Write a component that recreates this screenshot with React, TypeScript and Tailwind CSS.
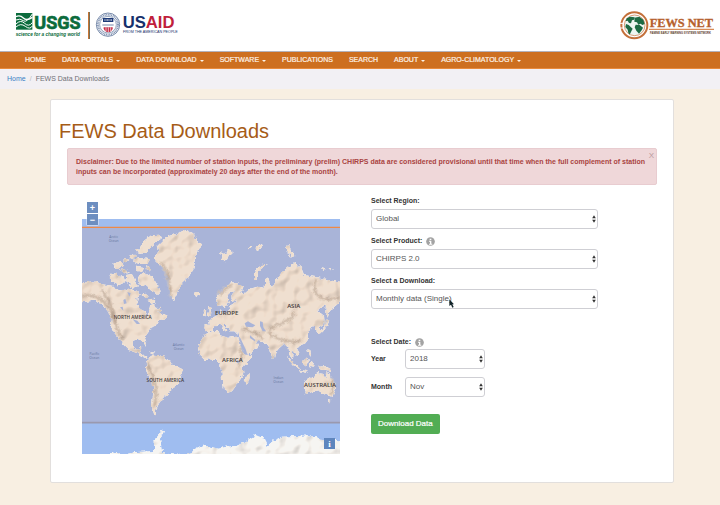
import type { ReactNode } from "react";

const NAV: { label: string; menu?: boolean }[] = [
  { label: "HOME" },
  { label: "DATA PORTALS", menu: true },
  { label: "DATA DOWNLOAD", menu: true },
  { label: "SOFTWARE", menu: true },
  { label: "PUBLICATIONS" },
  { label: "SEARCH" },
  { label: "ABOUT", menu: true },
  { label: "AGRO-CLIMATOLOGY", menu: true },
];

function UsgsLogo() {
  return (
    <svg viewBox="45 36 201 84" className="h-7 w-[67px]" role="img" aria-label="USGS">
      <rect x="48" y="39" width="49" height="50" fill="#0b6b3c" />
      <path d="M48 50 Q60 44 70 54 T97 52" fill="none" stroke="#fff" strokeWidth="4" />
      <path d="M48 60 Q60 54 70 62 T97 42" fill="none" stroke="#fff" strokeWidth="3" />
      <path d="M48 72 Q62 58 74 70 T97 68 M48 81 Q62 68 76 79 T97 78" fill="none" stroke="#fff" strokeWidth="3" />
      <text x="103" y="87" fill="#0b6b3c" stroke="#0b6b3c" strokeWidth="2" fontSize="54" fontWeight="700" fontFamily="Roboto, 'Liberation Sans', sans-serif">
        USGS
      </text>
      <text x="47" y="107" fill="#0b6b3c" fontSize="14" fontWeight="700" fontStyle="italic" fontFamily="'Liberation Sans', sans-serif">
        science for a changing world
      </text>
    </svg>
  );
}

function UsaidLogo() {
  return (
    <svg viewBox="285 36 252 84" className="h-7 w-[84px]" role="img" aria-label="USAID">
      <circle cx="324" cy="74" r="35" fill="#fff" stroke="#33507f" strokeWidth="2" />
      <circle cx="324" cy="74" r="30" fill="none" stroke="#8496b5" strokeWidth="6" strokeDasharray="3 2" />
      <circle cx="324" cy="74" r="25" fill="#fff" stroke="#33507f" strokeWidth="1.5" />
      <rect x="309" y="54" width="31" height="12" fill="#1d3a78" />
      <path d="M313 60h23" stroke="#fff" strokeWidth="3" strokeDasharray="3 1" />
      <path d="M307 72h34v6h-34z" fill="#b9c3d4" />
      <path d="M311 82h27v4q-4 10-13.500 11q-9-1-13.500-11z" fill="#c52b45" />
      <path d="M318 82v12M325 82v14M332 82v12" stroke="#fff" strokeWidth="2" />
      <text x="368" y="85" fontSize="50" fontWeight="700" fill="#16306b" fontFamily="'Liberation Sans', sans-serif">
        US<tspan fill="#c01f3c">AID</tspan>
      </text>
      <text x="369" y="100" fontSize="11" fill="#16306b" fontFamily="'Liberation Sans', sans-serif">
        FROM THE AMERICAN PEOPLE
      </text>
    </svg>
  );
}

function FewsLogo() {
  return (
    <svg viewBox="60 30 288 93" className="h-[31px] w-24" role="img" aria-label="FEWS NET">
      <circle cx="103" cy="76" r="39" fill="none" stroke="#c4703a" strokeWidth="6" />
      <path d="M60 70h12M60 84h12" stroke="#fff" strokeWidth="3" />
      <circle cx="104" cy="76" r="31" fill="#eef6f1" stroke="#c4703a" strokeWidth="2" />
      <path
        d="M80 55l10-5 14 2-2 7-6 2-3 9-6-1-4-7-6 2zM78 72l8 3 7 7 5 4-4 8-5 10-4-5-2-10-7-8zM104 53l14-3 12 9 4 13-7 3-5-4-7 3-4-7-8-2zM107 74l12 1 10 8-4 8-8 10-8-9-5-10z"
        fill="#1d6b43"
      />
      <path d="M147 88h195" stroke="#d88a55" strokeWidth="4" />
      <text x="149" y="80" fontSize="37" fontWeight="700" fill="#b5602c" stroke="#b5602c" strokeWidth="1" fontFamily="'Liberation Serif', serif">
        FEWS NET
      </text>
      <text x="150" y="101" fontSize="8" fontWeight="700" fill="#5b3a2a" fontFamily="'Liberation Sans', sans-serif">
        FAMINE EARLY WARNING SYSTEMS NETWORK
      </text>
    </svg>
  );
}

const LAND = [
  // North America
  "M20 280L70 274 95 282 130 288 152 302 175 296 200 302 212 314 198 326 204 350 222 362 230 378 238 366 240 346 252 342 266 366 286 382 268 392 262 402 246 408 236 425 224 442 230 460 228 470 220 456 205 448 192 452 188 466 194 478 204 478 210 470 214 474 208 486 218 496 232 500 228 506 210 498 196 486 176 480 158 462 146 444 134 430 122 408 126 388 112 362 94 342 70 332 20 338z",
  // Greenland
  "M250 205L266 184 260 170 278 152 296 138 318 132 345 120 372 132 378 150 394 164 386 180 374 200 374 220 368 242 350 268 332 284 324 304 312 334 302 318 298 290 296 262 284 236 268 222z",
  // South America
  "M238 502L250 494 268 496 282 500 298 510 306 524 322 530 338 538 334 556 322 582 304 596 292 612 280 622 266 642 258 660 258 676 248 670 246 645 250 610 248 575 236 560 228 540 230 518z",
  // Africa
  "M396 446L406 431 428 424 444 424 450 436 470 442 484 438 502 441 510 466 522 492 544 496 534 516 518 532 520 552 506 572 496 590 486 604 472 609 462 594 456 570 455 548 450 526 440 510 418 508 404 510 388 494 384 472z",
  // Eurasia
  "M404 404L420 404 418 392 430 382 446 374 452 358 458 370 474 366 478 350 496 342 500 334 488 334 484 320 492 302 482 302 472 322 476 338 464 354 454 342 442 346 438 330 452 308 468 290 488 277 512 284 520 296 508 304 522 310 536 298 562 290 584 294 586 268 594 260 600 282 606 292 618 270 634 248 654 232 676 220 694 234 702 254 728 260 756 264 800 276 820 280 820 344 806 336 790 350 778 366 774 380 766 366 768 346 752 352 742 362 762 378 764 400 746 412 752 426 744 430 736 414 722 406 724 420 712 430 716 446 706 460 686 468 680 474 688 488 682 498 668 484 666 506 658 494 656 472 642 462 628 474 616 488 612 504 602 490 594 466 578 456 556 452 568 470 550 484 530 493 520 474 506 446 502 428 492 424 480 424 470 406 460 402 472 422 466 424 450 402 434 406 428 420 414 426 404 422z",
  // Australia
  "M702 578L718 568 730 560 742 550 760 552 766 562 774 548 784 566 794 580 798 596 786 620 766 614 748 604 726 606 708 612 702 596z",
  // Islands
  "M528 556L540 550 538 568 530 584 524 576z M652 500L666 512 684 528 690 538 676 532 662 516z M698 512L712 502 716 514 708 526 698 522z M688 540L712 544 712 548 688 544z M722 514L732 516 728 530 720 528z M742 528L760 526 784 538 788 546 766 542 750 538z M712 478L720 480 724 498 716 494z M774 630L784 632 778 640z M770 388L778 392 770 410 758 426 746 432 760 414z M414 346L420 350 424 370 416 380 410 378 416 364z M400 362L410 364 406 376 398 374z M372 308L386 306 390 314 380 320 372 316z M450 186L462 192 478 180 488 186 470 204 466 214 456 206z M552 268L552 250 562 234 582 222 590 224 572 238 560 254 560 268z M650 168L658 166 664 186 674 196 668 206 656 190 648 182z M752 232L768 236 760 242z M776 236L788 238 782 244z M534 172L548 170 540 178z M556 174L576 162 578 170 562 180z M240 486L256 488 250 492z",
  // Canadian archipelago
  "M196 180L214 172 222 152 244 136 270 134 276 144 252 162 240 176 226 190 204 192z M180 198L194 190 200 202 186 208z M190 210L212 204 240 208 232 222 206 222 194 218z M130 224L150 214 160 222 146 236 134 232z M164 204L178 206 172 218 160 214z M122 252L140 248 144 262 160 258 166 276 146 286 124 276z M150 240L170 236 178 250 164 250z M168 258L190 254 198 270 188 282 170 276z M198 230L222 234 216 246 200 242z M204 258L226 248 248 262 262 284 272 304 262 314 244 302 226 286 206 284z M176 284L196 278 204 292 186 296z M226 226L244 232 240 244 228 240z M236 330L250 326 256 336 244 342z M214 314L228 308 234 320 222 322z M256 362L272 350 276 366z M270 378L288 374 290 386 276 386z M402 360L412 356 408 368z",
];

const WATER = [
  "M524 400L534 394 544 400 556 406 548 412 528 410z",
  "M570 394L578 396 580 412 588 424 578 424 570 408z",
  "M506 438L512 446 528 480 532 494 526 494 514 470z",
  "M540 436L556 450 554 454 540 444z",
  "M188 388L202 392 210 402 200 402z",
  "M502 510L508 512 506 520 500 518z",
  "M160 330L166 326 170 340 162 342z",
  "M150 352L158 350 160 362z",
  "M172 306L182 310 178 320z",
];

const RIDGES = [
  "M96 300Q128 342 134 382T160 448",
  "M40 318Q78 310 104 338T130 400",
  "M232 520Q242 550 252 572T254 650",
  "M590 424Q622 450 660 454T690 444",
  "M596 420Q620 404 650 392T668 362",
  "M516 416Q556 424 580 446",
  "M738 268Q724 298 746 318T806 322",
  "M446 314Q466 290 486 288",
  "M510 470Q522 492 506 526",
  "M784 566Q796 590 784 612",
  "M276 220Q296 250 304 320",
];

const REGIONS = [
  { x: 188, y: 386, size: 14, text: "NORTH AMERICA" },
  { x: 470, y: 374, size: 18, text: "EUROPE" },
  { x: 671, y: 354, size: 18, text: "ASIA" },
  { x: 487, y: 517, size: 18, text: "AFRICA" },
  { x: 286, y: 576, size: 14, text: "SOUTH AMERICA" },
  { x: 750, y: 592, size: 18, text: "AUSTRALIA" },
];

const OCEANS = [
  { x: 131, y: 145, name: "Arctic" },
  { x: 73, y: 495, name: "Pacific" },
  { x: 326, y: 468, name: "Atlantic" },
  { x: 625, y: 567, name: "Indian" },
];

function WorldMap() {
  return (
    <svg viewBox="36 87 774 705" className="block w-full" role="img" aria-label="World map">
      <defs>
        <filter id="relief" x="-5%" y="-5%" width="110%" height="110%" colorInterpolationFilters="sRGB">
          <feTurbulence type="fractalNoise" baseFrequency="0.08" numOctaves="3" seed="4" result="coast" />
          <feDisplacementMap in="SourceGraphic" in2="coast" scale="14" xChannelSelector="R" yChannelSelector="G" result="land" />
          <feTurbulence type="fractalNoise" baseFrequency="0.025" numOctaves="2" seed="9" result="hills" />
          <feDiffuseLighting in="hills" surfaceScale="4" diffuseConstant="1.17" lightingColor="#fffcfa" result="light">
            <feDistantLight azimuth="225" elevation="60" />
          </feDiffuseLighting>
          <feComposite in="light" in2="land" operator="in" result="shade" />
          <feBlend in="shade" in2="land" mode="multiply" />
        </filter>
        <filter id="soft">
          <feGaussianBlur stdDeviation="2.5" />
        </filter>
      </defs>
      <rect x="36" y="87" width="774" height="705" fill="#9fbdf0" />
      <rect x="36" y="112" width="774" height="586" fill="#a9b4d8" />
      <path d="M36 112H810" stroke="#ee8a48" strokeWidth="4" />
      <path d="M36 698H810" stroke="#9a99ae" strokeWidth="5" />
      <g filter="url(#relief)" fill="#efdfd0">
        {LAND.map((d) => (
          <path key={d} d={d} />
        ))}
        <g fill="none" stroke="#b5a08e" strokeWidth="5" filter="url(#soft)">
          {RIDGES.map((d) => (
            <path key={d} d={d} />
          ))}
        </g>
      </g>
      <g fill="#a9b4d8">
        {WATER.map((d) => (
          <path key={d} d={d} />
        ))}
      </g>
      <g filter="url(#relief)" fill="#f6f5f2">
        <path d="M96 800L130 788 160 794 200 786 250 784 258 768 250 752 262 740 276 722 282 724 270 744 276 790 340 796 366 790 376 776 400 764 420 770 446 776 470 770 500 768 530 752 556 736 584 744 592 768 610 752 636 740 690 738 716 736 750 746 820 752 820 810 90 810z" />
      </g>
      <g fill="#3f3a3a" fontFamily="'Open Sans', 'Noto Sans', sans-serif" fontWeight="600" textAnchor="middle">
        {REGIONS.map((r) => (
          <text key={r.text} x={r.x} y={r.y} fontSize={r.size}>
            {r.text}
          </text>
        ))}
      </g>
      <g fill="#66769f" fontFamily="'Open Sans', sans-serif" fontSize="10" textAnchor="middle">
        {OCEANS.map((o) => (
          <text key={o.name} x={o.x} y={o.y}>
            {o.name}
            <tspan x={o.x} dy="11">
              Ocean
            </tspan>
          </text>
        ))}
      </g>
    </svg>
  );
}

function InfoDot({ label }: { label: string }) {
  return (
    <button type="button" aria-label={label} className="block">
      <svg viewBox="0 0 27 27" className="block size-[9px]" aria-hidden="true">
        <circle cx="13.500" cy="13.500" r="13" fill="#a3a3a3" />
        <path d="M11 5h5v4h-5zM9 11h7v9h3v3H9v-3h3v-6H9z" fill="#fff" />
      </svg>
    </button>
  );
}

function Picker({ id, value, children }: { id: string; value: string; children?: ReactNode }) {
  return (
    <div className="relative">
      <select
        id={id}
        className="block h-5 w-full appearance-none rounded-[3px] border border-[#cfcfd4] bg-white pr-4 pl-1 text-[8px] text-[#555]"
        defaultValue={value}
      >
        <option>{value}</option>
      </select>
      <svg viewBox="0 0 12 24" className="pointer-events-none absolute top-1.5 right-0.5 h-2 w-1" aria-hidden="true">
        <path d="M6 1l5.500 9H.5zM6 23l5.500-9H.5z" fill="#333" />
      </svg>
      {children}
    </div>
  );
}

function Pointer() {
  return (
    <svg viewBox="0 0 15 27" className="pointer-events-none absolute top-2.5 left-[78px] h-[9px] w-[5px]" aria-hidden="true">
      <path d="M1 1v20l5-4 4 9 4-2-4-8h5z" fill="#12242a" />
    </svg>
  );
}

export default function App() {
  return (
    <div className="min-h-screen bg-[#f8efe2] font-['Liberation_Sans',Arial,sans-serif] text-[7px] leading-[10px] text-[#333]">
      <header className="flex h-[51px] items-center bg-white pr-1 pl-[15px]">
        <UsgsLogo />
        <span className="ml-1.5 h-[27px] w-[2px] border-l border-[#c87534] bg-[#75705a]" />
        <span className="ml-[5px]">
          <UsaidLogo />
        </span>
        <span className="ml-auto">
          <FewsLogo />
        </span>
      </header>

      <nav className="flex h-[18px] items-center gap-4 border-t border-b border-t-[#b4b2bb] border-b-[#e88a3c] bg-[#cd6f20] pl-[25px] text-[#fdf3e8]">
        {NAV.map((item) => (
          <a key={item.label} href="#" className="flex items-center gap-[3px] whitespace-nowrap [-webkit-text-stroke:0.2px]">
            {item.label}
            {item.menu && <span className="mt-px border-x-2 border-t-2 border-x-transparent border-t-[#fdf3e8]" />}
          </a>
        ))}
      </nav>

      <div className="flex h-5 items-center gap-1 bg-[#f2f0f4] pl-[7px] text-[#6f6f74]">
        <a href="#" className="text-[#3a7fc4]">
          Home
        </a>
        <span className="text-[#bbb]">/</span>
        <span>FEWS Data Downloads</span>
      </div>

      <main className="mt-2.5 mr-[46px] ml-[50px] rounded-[2px] border border-[#e2dfdd] bg-white pb-7">
        <h1 className="mt-[19px] ml-2 text-[20px] leading-6 text-[#a65c17]">FEWS Data Downloads</h1>

        <div className="relative mx-4 mt-[5px] rounded-[2px] border border-[#e8ccd0] bg-[#efd7d9] pt-2 pr-2 pb-[7px] pl-2 font-bold text-[#a94442]">
          <p>
            Disclaimer: Due to the limited number of station inputs, the preliminary (prelim) CHIRPS data are considered provisional until that time when the full complement of station inputs can be incorporated (approximately 20 days after the end of the month).
          </p>
          <button type="button" aria-label="Close" className="absolute top-0.5 right-0.5 text-[8px] font-normal text-[#b99a9d]">
            X
          </button>
        </div>

        <div className="mt-2.5 grid grid-cols-[258fr_227fr] gap-x-[31px] pr-[75px] pl-[31px]">
          <div className="relative pt-6">
            <WorldMap />
            <div className="absolute top-1.5 left-1 flex flex-col gap-px rounded-[2px] bg-white/40 p-px text-[9px] leading-[10px] font-bold text-white">
              <button type="button" aria-label="Zoom in" className="size-[11px] bg-[#6d8ec0]">
                +
              </button>
              <button type="button" aria-label="Zoom out" className="size-[11px] bg-[#6d8ec0]">
                −
              </button>
            </div>
            <button type="button" aria-label="Attribution" className="absolute right-[5px] bottom-[5px] size-[11px] bg-[#5f86bd] font-['Liberation_Serif',serif] text-[9px] font-bold text-white">
              i
            </button>
          </div>

          <form onSubmit={(e) => e.preventDefault()}>
            <div className="flex h-[14px] items-center pb-0.5 font-bold">
              <label htmlFor="region">Select Region:</label>
            </div>
            <Picker id="region" value="Global" />
            <div className="mt-1.5 flex h-[14px] items-center gap-1 pb-0.5 font-bold">
              <label htmlFor="product">Select Product:</label>
              <InfoDot label="About products" />
            </div>
            <Picker id="product" value="CHIRPS 2.0" />
            <div className="mt-1.5 flex h-[14px] items-center pb-0.5 font-bold">
              <label htmlFor="download">Select a Download:</label>
            </div>
            <Picker id="download" value="Monthly data (Single)">
              <Pointer />
            </Picker>

            <fieldset className="mt-[26px]">
              <legend className="flex h-[14px] items-center gap-1 font-bold">
                Select Date:
                <InfoDot label="About dates" />
              </legend>
              <div className="grid grid-cols-[34px_80px] items-center gap-y-2">
                <label htmlFor="year" className="font-bold">
                  Year
                </label>
                <Picker id="year" value="2018" />
                <label htmlFor="month" className="font-bold">
                  Month
                </label>
                <Picker id="month" value="Nov" />
              </div>
            </fieldset>

            <button type="submit" className="mt-[17px] h-5 rounded-[2px] bg-[#52ad54] px-[7px] text-[8px] text-white [-webkit-text-stroke:0.2px]">
              Download Data
            </button>
          </form>
        </div>
      </main>
    </div>
  );
}
